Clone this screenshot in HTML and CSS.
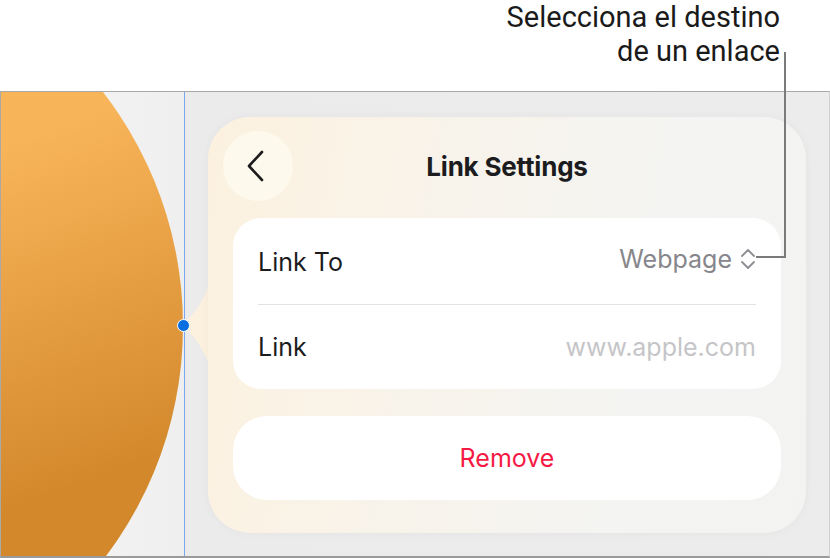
FILE: index.html
```html
<!DOCTYPE html>
<html lang="es">
<head>
<meta charset="utf-8">
<link rel="stylesheet" href="styles.css">
</head>
<body>
<div class="callout">
  <p class="callout-text">Selecciona el destino<br>de un enlace</p>
</div>
<div class="frame">
  <div class="shape"></div>
  <div class="guide"></div>
  <svg class="pointer" width="30" height="80" viewBox="0 0 30 80"><path d="M30 0 C24 18 14 30 6 36 C2 39 2 41 6 44 C14 50 24 62 30 80 Z" fill="#fcf1df"/></svg>
  <div class="dot"></div>
  <div class="panel">
    <div class="header">
      <button class="back" aria-label="Back">
        <svg width="20" height="32" viewBox="0 0 20 32"><path d="M15 2 L2 16 L15 30" fill="none" stroke="#1c1c1e" stroke-width="2.6" stroke-linecap="round" stroke-linejoin="round"/></svg>
      </button>
      <h1 class="title">Link Settings</h1>
    </div>
    <div class="card">
      <div class="row">
        <span class="label">Link To</span>
        <span class="value">Webpage
          <svg class="updown" width="16" height="22" viewBox="0 0 16 22"><path d="M2 8 L8 2 L14 8 M2 14 L8 20 L14 14" fill="none" stroke="#8e8e93" stroke-width="1.8" stroke-linecap="round" stroke-linejoin="round"/></svg>
        </span>
      </div>
      <div class="divider"></div>
      <div class="row">
        <span class="label">Link</span>
        <span class="placeholder">www.apple.com</span>
      </div>
    </div>
    <button class="remove">Remove</button>
  </div>
</div>
<svg class="leader" width="40" height="210" viewBox="0 0 40 210"><path d="M29 0 V205 H0" fill="none" stroke="#7a7a7a" stroke-width="2"/></svg>
</body>
</html>
```
FILE: styles.css
```css
* { box-sizing: border-box; }
html, body { margin: 0; padding: 0; }
body {
  position: relative;
  width: 830px;
  height: 558px;
  overflow: hidden;
  background: #ffffff;
  font-family: "Inter", "Roboto", sans-serif;
  color: #1c1c1e;
}
.callout {
  height: 91px;
  display: flex;
  justify-content: flex-end;
  padding-right: 50px;
}
.callout-text {
  margin: 0;
  text-align: right;
  font-family: "Roboto", "Inter", sans-serif;
  font-size: 29px;
  line-height: 34px;
  color: #1a1a1a;
}
.frame {
  position: relative;
  height: 467px;
  border-top: 1px solid #a9a9a9;
  border-left: 1px solid #a9a9a9;
  border-right: 1px solid #d0d0d0;
  border-bottom: 2px solid #9a9a9a;
  background: linear-gradient(90deg, #f6f6f6 0px, #efefef 183px, #ebebeb 184px, #ececec 830px);
  padding: 25px 24px 0 207px;
  overflow: hidden;
}
.shape {
  position: absolute;
  left: -582px;
  top: -148px;
  width: 764px;
  height: 764px;
  border-radius: 50%;
  background: linear-gradient(160deg, #f8b459 40%, #d3882c 75%);
}
.guide {
  position: absolute;
  left: 183px;
  top: 0;
  width: 1px;
  height: 100%;
  background: #7aa6ee;
}
.pointer {
  position: absolute;
  left: 178px;
  top: 193px;
}
.dot {
  position: absolute;
  left: 176px;
  top: 227px;
  width: 13px;
  height: 13px;
  border-radius: 50%;
  background: #0b6fe0;
  border: 1.5px solid #ffffff;
}
.leader {
  position: absolute;
  left: 756px;
  top: 52px;
}
.panel {
  position: relative;
  width: 598px;
  height: 416px;
  border-radius: 42px;
  background: linear-gradient(100deg, #fcf1df 0%, #f8f3ea 35%, #f4f4f2 70%, #f3f3f2 100%);
  box-shadow: 0 0 10px rgba(0,0,0,0.04);
  padding: 14px 25px 0 25px;
  display: flex;
  flex-direction: column;
}
.header {
  position: relative;
  height: 70px;
  margin-left: -10px;
  display: flex;
  align-items: center;
  justify-content: center;
}
.back {
  position: absolute;
  left: 0;
  top: 0;
  width: 70px;
  height: 70px;
  border: none;
  border-radius: 50%;
  background: #fdf9ec;
  display: flex;
  align-items: center;
  justify-content: center;
  padding: 0 2px 0 0;
}
.title {
  margin: 0 0 0 10px;
  font-size: 26px;
  font-weight: 700;
  letter-spacing: -0.2px;
}
.card {
  margin-top: 17px;
  background: #ffffff;
  border-radius: 28px;
  padding: 0 25px;
  height: 171px;
  display: flex;
  flex-direction: column;
}
.row {
  flex: 1;
  display: flex;
  align-items: center;
  justify-content: space-between;
  font-size: 25px;
}
.row:first-child { padding-top: 2px; }
.divider {
  height: 1px;
  background: #e3e3e5;
}
.label { color: #1c1c1e; }
.value {
  color: #86868b;
  display: flex;
  align-items: center;
  gap: 8px;
  margin-right: 0;
  margin-top: -6px;
}
.placeholder { color: #c5c5c8; }
.remove {
  margin-top: 27px;
  height: 84px;
  border: none;
  border-radius: 34px;
  background: #ffffff;
  color: #f51a44;
  font-family: "Inter", "Roboto", sans-serif;
  font-size: 25px;
}
```
